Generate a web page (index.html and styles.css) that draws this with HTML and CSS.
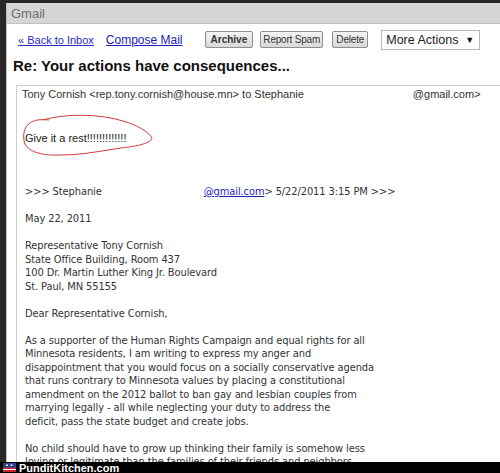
FILE: index.html
```html
<!DOCTYPE html>
<html lang="en">
<head>
    <meta charset="UTF-8">
    <meta name="viewport" content="width=device-width, initial-scale=1.0">
    <title>Gmail - Re: Your actions have consequences...</title>
    <link rel="stylesheet" href="styles.css">
</head>
<body>
    <div class="screen">
        <div class="window">
            <div class="titlebar">Gmail</div>

            <div class="toolbar">
                <a href="#" class="nav-link back-link">&laquo; Back to Inbox</a>
                <a href="#" class="nav-link compose-link">Compose Mail</a>
                <button class="tool-btn archive-btn">Archive</button>
                <button class="tool-btn spam-btn">Report Spam</button>
                <button class="tool-btn delete-btn">Delete</button>
                <div class="more-actions">
                    <span>More Actions</span>
                    <span class="arrow">&#9660;</span>
                </div>
            </div>

            <h1 class="subject">Re: Your actions have consequences...</h1>

            <div class="message">
                <div class="msg-head">
                    <span>Tony Cornish &lt;rep.tony.cornish@house.mn&gt; to Stephanie</span>
                    <span class="redacted"></span>
                    <span>@gmail.com&gt;</span>
                </div>

                <div class="reply">
                    <span class="reply-text">Give it a rest!!!!!!!!!!!!!</span>
                    <svg class="scribble" width="136" height="46" viewBox="0 0 136 46">
                        <path d="M22 8 C 45 1, 80 2, 102 9 C 116 13, 128 20, 131 26 C 130 31, 118 34, 100 36 C 80 39, 60 43, 40 43 C 22 44, 8 40, 4 32 C 1 24, 3 15, 9 11 C 13 8, 19 7, 28 8" fill="none" stroke="#d23a3a" stroke-width="1"/>
                    </svg>
                </div>

                <div class="quoted">
                    <p>&gt;&gt;&gt; Stephanie <span class="gap"></span><a href="#">@gmail.com</a>&gt; 5/22/2011 3:15 PM &gt;&gt;&gt;</p>
                    <p>May 22, 2011</p>
                    <p>Representative Tony Cornish<br>
                    State Office Building, Room 437<br>
                    100 Dr. Martin Luther King Jr. Boulevard<br>
                    St. Paul, MN 55155</p>
                    <p>Dear Representative Cornish,</p>
                    <p>As a supporter of the Human Rights Campaign and equal rights for all<br>
                    Minnesota residents, I am writing to express my anger and<br>
                    disappointment that you would focus on a socially conservative agenda<br>
                    that runs contrary to Minnesota values by placing a constitutional<br>
                    amendment on the 2012 ballot to ban gay and lesbian couples from<br>
                    marrying legally - all while neglecting your duty to address the<br>
                    deficit, pass the state budget and create jobs.</p>
                    <p>No child should have to grow up thinking their family is somehow less<br>
                    loving or legitimate than the families of their friends and neighbors.</p>
                </div>
            </div>
        </div>

        <div class="watermark">
            <svg class="wm-icon" width="13" height="9" viewBox="0 0 13 9">
                <rect x="0" y="0" width="13" height="9" fill="#2a3f8f"/>
                <rect x="0" y="4.5" width="13" height="4.5" fill="#c0262d"/>
                <rect x="0" y="6" width="13" height="1" fill="#fff"/>
                <circle cx="4" cy="2.2" r="0.9" fill="#fff"/>
                <circle cx="8.5" cy="2.2" r="0.9" fill="#fff"/>
            </svg>
            <span>PunditKitchen.com</span>
        </div>
    </div>
</body>
</html>
```

FILE: styles.css
```css
* {
    margin: 0;
    padding: 0;
    box-sizing: border-box;
}

body {
    background: #2b2725;
    font-family: 'Liberation Sans', Arial, sans-serif;
}

.screen {
    width: 500px;
    height: 473px;
    overflow: hidden;
    padding-top: 3px;
    display: flex;
    flex-direction: column;
}

.window {
    flex: 1;
    min-height: 0;
    overflow: hidden;
    margin-left: 6px;
    background: white;
    border-left: 1px solid #bdbdbd;
}

.titlebar {
    height: 21px;
    line-height: 21px;
    background: #d6d6d6;
    border-bottom: 1px solid #c2c2c2;
    padding-left: 4px;
    font-size: 13px;
    color: #6e6e6e;
}

.toolbar {
    display: flex;
    align-items: center;
    white-space: nowrap;
    padding: 5px 0 0 11px;
    height: 26px;
}

.nav-link {
    color: #2a2ac4;
    font-size: 11px;
    text-decoration: underline;
    margin-right: 12px;
}

.compose-link {
    font-size: 12px;
    color: #1c1cb8;
    margin-right: 22px;
}

.tool-btn {
    font-family: 'Liberation Sans', Arial, sans-serif;
    font-size: 10px;
    letter-spacing: -0.2px;
    color: #333;
    height: 17px;
    padding: 0 1px;
    background: linear-gradient(#f4f4f4, #d8d8d8);
    border: 1px solid #8e8e8e;
    border-radius: 2px;
    white-space: nowrap;
}

.archive-btn {
    font-weight: bold;
    letter-spacing: 0;
    padding: 0 5px;
    margin-right: 7px;
}

.spam-btn {
    width: 63px;
    margin-right: 9px;
}

.delete-btn {
    width: 36px;
    margin-right: 13px;
}

.more-actions {
    display: flex;
    align-items: center;
    justify-content: space-between;
    width: 99px;
    height: 20px;
    padding: 0 5px 0 4px;
    border: 1px solid #b8b8b8;
    font-size: 12.5px;
    color: #222;
    white-space: nowrap;
}

.more-actions .arrow {
    font-size: 9px;
    color: #111;
}

.subject {
    font-size: 15px;
    font-weight: bold;
    color: #111;
    padding: 7px 0 0 6px;
    height: 35px;
    white-space: nowrap;
}

.message {
    margin-left: 9px;
    border-top: 1px solid #cfcfcf;
    border-left: 1px solid #cfcfcf;
    padding-left: 5px;
}

.msg-head {
    display: flex;
    white-space: nowrap;
    font-size: 11px;
    color: #333;
    padding-top: 2px;
    height: 24px;
}

.redacted {
    width: 109px;
}

.reply {
    position: relative;
    height: 75px;
    padding-top: 18px;
    padding-left: 3px;
}

.reply-text {
    font-size: 11px;
    color: #222;
}

.scribble {
    position: absolute;
    left: -1px;
    top: 2px;
}

.quoted {
    font-family: 'DejaVu Sans', sans-serif;
    font-stretch: condensed;
    font-size: 11px;
    line-height: 13.5px;
    letter-spacing: -0.1px;
    color: #333;
    padding-left: 3px;
    white-space: nowrap;
}

.quoted p {
    margin-bottom: 13.5px;
}

.quoted .gap {
    display: inline-block;
    width: 99px;
}

.quoted a {
    color: #2323b5;
}

.watermark {
    flex: none;
    height: 11px;
    background: #000;
    display: flex;
    align-items: center;
    padding-left: 3px;
    gap: 3px;
    color: white;
    font-family: 'Liberation Sans', Arial, sans-serif;
    font-weight: bold;
    font-size: 11px;
}
```
